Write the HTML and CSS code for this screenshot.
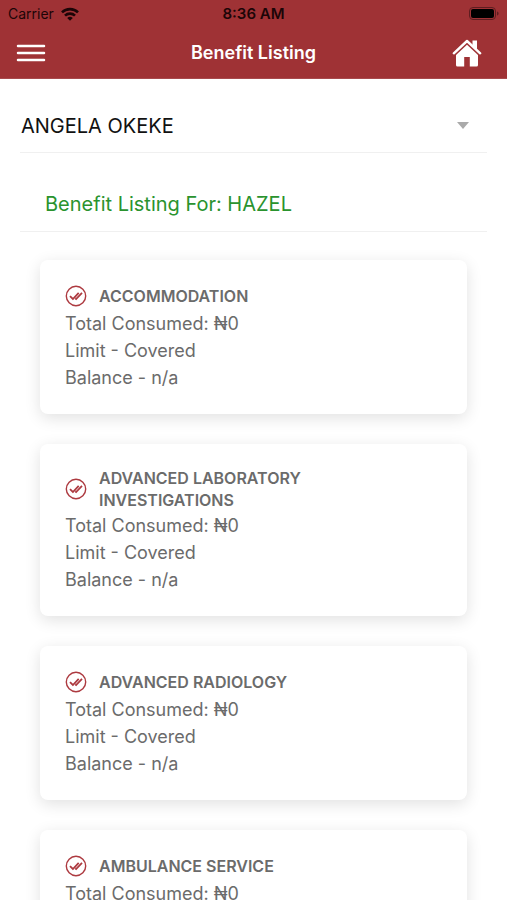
FILE: index.html
```
<!DOCTYPE html>
<html lang="en">
<head>
  <meta charset="UTF-8">
  <meta name="viewport" content="width=device-width, initial-scale=1">
  <title>Benefit Listing</title>
  <link rel="stylesheet" href="styles.css">
</head>
<body>
  <!-- Shared icon -->
  <svg class="sprite" aria-hidden="true">
    <symbol id="icon-check" viewBox="0 0 22 22">
      <circle cx="11" cy="11" r="9.7" fill="none" stroke="currentColor" stroke-width="1.4"/>
      <path d="M5 11.200l2.900 2.800 5.800-6.200M10.300 13.300l.8.700 5.900-6.200" fill="none" stroke="currentColor" stroke-width="1.800"/>
    </symbol>
  </svg>

  <header class="header">
    <div class="status-bar">
      <div class="carrier">
        <span>Carrier</span>
        <svg width="18" height="14" viewBox="0 0 18 14" fill="none" stroke="currentColor" stroke-width="2.6">
          <path d="M1 5.4a11.3 11.3 0 0 1 16 0"/>
          <path d="M4 8.7a7 7 0 0 1 10 0"/>
          <path d="M9 13.8L6.2 11a4 4 0 0 1 5.6 0z" fill="currentColor" stroke="none"/>
        </svg>
      </div>
      <span class="time">8:36 AM</span>
      <svg class="battery" width="30" height="14" viewBox="0 0 30 14">
        <rect x=".5" y=".5" width="26" height="12" rx="3.5" fill="none" stroke="#5e1d20"/>
        <rect x="2" y="2" width="23" height="9" rx="2" fill="#000"/>
        <path d="M28 4.500v4c1-.3 1.600-1.100 1.600-2s-.6-1.700-1.600-2z" fill="#5e1d20"/>
      </svg>
    </div>
    <nav class="nav-bar">
      <button type="button" class="icon-btn" aria-label="Menu">
        <svg width="30" height="20" viewBox="0 0 30 20" fill="none" stroke="currentColor" stroke-width="2.500" stroke-linecap="round">
          <path d="M2 3h26M2 10h26M2 17h26"/>
        </svg>
      </button>
      <h1 class="nav-title">Benefit Listing</h1>
      <button type="button" class="icon-btn home-btn" aria-label="Home">
        <svg width="30" height="28" viewBox="0 0 30 28" fill="currentColor">
          <path d="M20.500 1.500h4.500v9l-4.500-4z"/>
          <path d="M1.800 14.300L15 2l13.200 12.300" fill="none" stroke="currentColor" stroke-width="2.400" stroke-linecap="round" stroke-linejoin="round"/>
          <path d="M15 5.700l11 10.300V26a1.500 1.500 0 0 1-1.500 1.500H17.800V18h-5.600v9.500H5.500A1.500 1.500 0 0 1 4 26V16z"/>
        </svg>
      </button>
    </nav>
  </header>

  <main class="content">
    <div class="select-row">
      <select class="member-select" aria-label="Member">
        <option>ANGELA OKEKE</option>
      </select>
      <svg class="caret" width="12" height="7" viewBox="0 0 12 7"><path d="M0 0h12L6 7z" fill="currentColor"/></svg>
    </div>

    <h2 class="listing-for">Benefit Listing For: HAZEL</h2>

    <div class="cards">
      <section class="card">
        <div class="card-head">
          <svg class="check"><use href="#icon-check"/></svg>
          <h3 class="card-title">ACCOMMODATION</h3>
        </div>
        <p>Total Consumed: ₦0</p>
        <p>Limit - Covered</p>
        <p>Balance - n/a</p>
      </section>

      <section class="card">
        <div class="card-head">
          <svg class="check"><use href="#icon-check"/></svg>
          <h3 class="card-title">ADVANCED LABORATORY INVESTIGATIONS</h3>
        </div>
        <p>Total Consumed: ₦0</p>
        <p>Limit - Covered</p>
        <p>Balance - n/a</p>
      </section>

      <section class="card">
        <div class="card-head">
          <svg class="check"><use href="#icon-check"/></svg>
          <h3 class="card-title">ADVANCED RADIOLOGY</h3>
        </div>
        <p>Total Consumed: ₦0</p>
        <p>Limit - Covered</p>
        <p>Balance - n/a</p>
      </section>

      <section class="card">
        <div class="card-head">
          <svg class="check"><use href="#icon-check"/></svg>
          <h3 class="card-title">AMBULANCE SERVICE</h3>
        </div>
        <p>Total Consumed: ₦0</p>
        <p>Limit - Covered</p>
        <p>Balance - n/a</p>
      </section>
    </div>
  </main>
</body>
</html>
```
FILE: styles.css
```
:root {
  --primary: #9f3235;
  --green: #2a932e;
  --text: #6b6b6b;
  --line: #f0f0f0;
}
* { box-sizing: border-box; }
html { scrollbar-width: none; }
body {
  margin: 0;
  font-family: Inter, "Liberation Sans", Arial, sans-serif;
  font-size: 18px;
  color: var(--text);
  background: #fff;
}
h1, h2, h3, p { margin: 0; }
.sprite { display: block; width: 0; height: 0; }

/* Header */
.header { background: var(--primary); color: #fff; border-bottom: 1px solid #a84a4d; }
.status-bar {
  display: grid;
  grid-template-columns: 1fr auto 1fr;
  align-items: center;
  height: 27px;
  padding: 0 8px;
  font-size: 14px;
  color: #1c0507;
}
.carrier { display: flex; align-items: center; gap: 7px; }
.time { font-size: 15px; font-weight: 600; }
.battery { justify-self: end; }
.nav-bar {
  display: grid;
  grid-template-columns: 1fr auto 1fr;
  align-items: center;
  height: 51px;
  padding: 0 16px;
}
.nav-title { font-size: 18px; font-weight: 600; line-height: 24px; }
.icon-btn { display: flex; padding: 0; border: 0; background: none; color: inherit; justify-self: start; cursor: pointer; }
.home-btn { justify-self: end; padding-right: 9px; }

/* Content */
.content { padding: 20px 20px 30px; }
.select-row { display: flex; align-items: center; border-bottom: 1px solid var(--line); padding-right: 18px; }
.member-select {
  flex: 1;
  height: 53px;
  padding: 0 1px;
  border: 0;
  appearance: none;
  background: none;
  font: inherit;
  font-size: 20px;
  color: #111;
}
.caret { color: #aaa; pointer-events: none; }
.listing-for {
  padding: 38px 25px 14px;
  border-bottom: 1px solid var(--line);
  font-size: 20px;
  font-weight: 400;
  line-height: 26px;
  color: var(--green);
}

/* Cards */
.cards { display: grid; gap: 30px; padding: 28px 20px 0; }
.card {
  padding: 23px 25px;
  border-radius: 8px;
  background: #fff;
  box-shadow: 0 4px 16px rgba(0, 0, 0, 0.12);
  line-height: 27px;
}
.card-head { display: flex; align-items: center; gap: 12px; min-height: 27px; padding-bottom: 1px; }
.check { width: 22px; height: 22px; flex: none; color: #ad3a40; }
.card-title { max-width: 240px; font-size: 16px; font-weight: 600; line-height: 22px; }
```
